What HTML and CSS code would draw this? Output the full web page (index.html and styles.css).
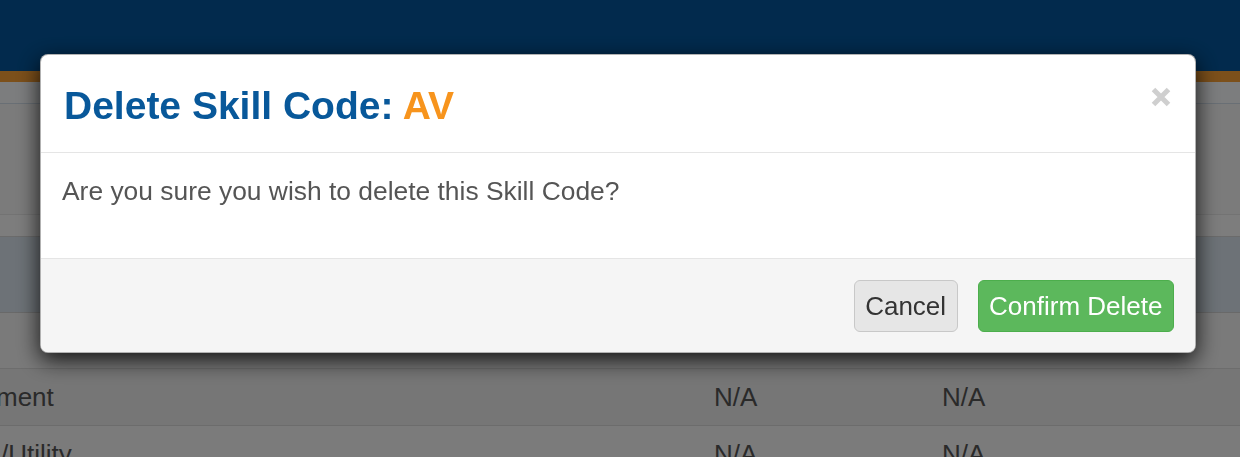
FILE: index.html
```html
<!DOCTYPE html>
<html>
<head>
<meta charset="utf-8">
<title>Delete Skill Code</title>
<link rel="stylesheet" href="styles.css">
</head>
<body>
<div class="page">
  <header class="topbar"></header>
  <div class="subbar"></div>
  <div class="rows">
    <div class="row row-a"></div>
    <div class="row row-b"></div>
    <div class="row row-c"></div>
    <div class="row row-d"></div>
    <div class="row row-e"><span class="cell first">ment</span><span class="cell">N/A</span><span class="cell">N/A</span></div>
    <div class="row row-f"><span class="cell first shift">/Utility</span><span class="cell">N/A</span><span class="cell">N/A</span></div>
  </div>
</div>
<div class="backdrop"></div>
<div class="modal-wrap">
  <div class="modal">
    <div class="modal-header">
      <h3 class="modal-title">Delete Skill Code: <span class="code">AV</span></h3>
      <button class="close" aria-label="Close"><svg width="20" height="20" viewBox="0 0 20 20"><path d="M2.5 2.5 L17.5 17.5 M17.5 2.5 L2.5 17.5" stroke="#cfcfcf" stroke-width="5" stroke-linecap="butt"/></svg></button>
    </div>
    <div class="modal-body">
      <p class="message">Are you sure you wish to delete this Skill Code?</p>
    </div>
    <div class="modal-footer">
      <button class="btn btn-default">Cancel</button>
      <button class="btn btn-success">Confirm Delete</button>
    </div>
  </div>
</div>
</body>
</html>
```
FILE: styles.css
```css
* { box-sizing: border-box; }
html, body { margin: 0; padding: 0; }
body {
  width: 1240px;
  height: 457px;
  overflow: hidden;
  font-family: "Liberation Sans", Arial, sans-serif;
  color: #555;
  background: #f6f6f6;
}
.page { width: 1240px; }
.topbar {
  height: 82px;
  background: #04559a;
  border-bottom: 11px solid #f9a036;
}
.subbar {
  height: 22px;
  background: #f9fbfd;
  border-bottom: 1px solid #d2deea;
}
.rows { display: flex; flex-direction: column; }
.row {
  display: grid;
  grid-template-columns: 714px 228px 1fr;
  align-items: center;
  font-size: 26px;
  color: #555;
  border-bottom: 1px solid #e2e2e2;
}
.row-a { height: 111px; background: #f6f6f6; border-bottom-color: #e6e6e6; }
.row-b { height: 22px; background: #fafafa; border-bottom-color: #d6d6d6; }
.row-c { height: 76px; background: #dae5ee; border-bottom-color: #d2d2d2; }
.row-d { height: 56px; background: #f4f4f4; border-bottom-color: #dadada; }
.row-e { height: 57px; background: #ececec; border-bottom-color: #d8d8d8; }
.row-f { height: 57px; background: #f6f6f6; align-items: start; padding-top: 13px; }
.cell { white-space: nowrap; line-height: 30px; }
.first { margin-left: -4px; }
.first.shift { margin-left: 1px; }

.backdrop {
  position: fixed;
  inset: 0;
  background: rgba(0, 0, 0, 0.5);
}
.modal-wrap {
  position: fixed;
  inset: 0;
  padding: 54px 44px 0 40px;
}
.modal {
  width: 1156px;
  background: #fff;
  border: 1px solid rgba(0, 0, 0, 0.3);
  border-radius: 8px;
  box-shadow: 0 7px 22px rgba(0, 0, 0, 0.85);
  overflow: hidden;
}
.modal-header {
  display: flex;
  justify-content: space-between;
  align-items: flex-start;
  padding: 29px 24px 25px 23px;
  border-bottom: 1px solid #e5e5e5;
}
.modal-title {
  margin: 0;
  font-size: 39px;
  line-height: 43px;
  font-weight: bold;
  color: #08589a;
}
.code { color: #f7941d; }
.close {
  background: none;
  border: 0;
  padding: 0;
  margin-top: 3px;
  width: 20px;
  height: 20px;
  display: block;
}
.close svg { display: block; }
.modal-body {
  padding: 20px 21px 0 21px;
  height: 106px;
  border-bottom: 1px solid #e5e5e5;
}
.message {
  margin: 0;
  font-size: 26.4px;
  line-height: 37px;
  color: #555;
}
.modal-footer {
  display: flex;
  justify-content: flex-end;
  gap: 20px;
  padding: 21px 21px 20px;
  background: #f5f5f5;
}
.btn {
  font-family: "Liberation Sans", Arial, sans-serif;
  font-size: 26px;
  height: 52px;
  line-height: 50px;
  padding: 0 10.5px;
  border-radius: 6px;
  border: 1px solid transparent;
  cursor: pointer;
}
.btn-default {
  background: #e6e6e6;
  border-color: #c8c8c8;
  color: #333;
}
.btn-success {
  background: #5cb85c;
  border-color: #4cae4c;
  color: #fff;
}
```
